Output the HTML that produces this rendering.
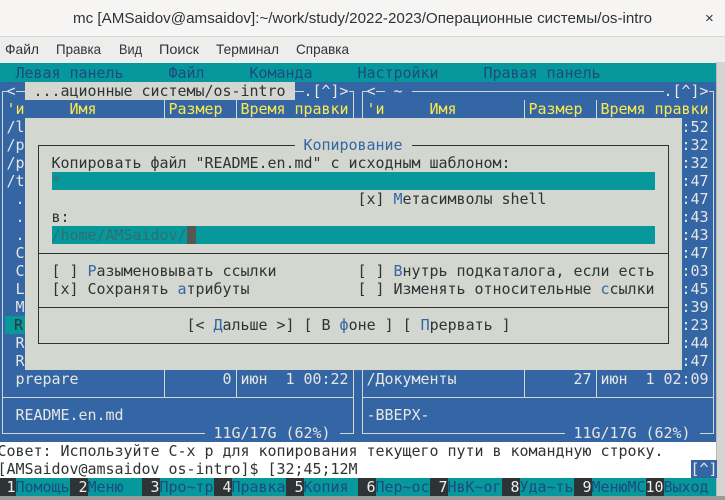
<!DOCTYPE html>
<html><head><meta charset="utf-8"><style>
*{margin:0;padding:0;box-sizing:border-box}
body{width:725px;height:500px;overflow:hidden;background:#fff;position:relative;font-family:"DejaVu Sans Mono","Liberation Mono",monospace}
.a{position:absolute}
.t{position:absolute;font:15px/18px "DejaVu Sans Mono","Liberation Mono",monospace;letter-spacing:-0.03px;white-space:pre;height:18px}
.w{color:#e6e6e4}.y{color:#fce94f}.k{color:#2e3436}.h{color:#3465a4}
.hl{position:absolute;height:1px}
.vl{position:absolute;width:1px}
.pb{background:#3465a4}
.bk{background:#2e3436;color:#eeeeec}
.tl{background:#06989a;color:#1d4b80}
</style></head><body>
<div class="a" style="left:0;top:0;width:725px;height:36px;background:#f6f5f4"></div>
<div class="a" style="left:0;top:36px;width:725px;height:28px;background:#ededec;border-top:1px solid #d8d8d8"></div>
<svg class="a" style="left:0;top:0" width="725" height="64">
<text x="73" y="23" textLength="579" lengthAdjust="spacingAndGlyphs" font-family="Liberation Sans, sans-serif" font-size="15" fill="#2e3436">mc [AMSaidov@amsaidov]:~/work/study/2022-2023/Операционные системы/os-intro</text>
<text x="705" y="23" font-family="Liberation Sans, sans-serif" font-size="15" fill="#2e3436">×</text>
<g font-family="Liberation Sans, sans-serif" font-size="14" fill="#2e3436">
<text x="5" y="54" textLength="34" lengthAdjust="spacingAndGlyphs">Файл</text>
<text x="56" y="54" textLength="45" lengthAdjust="spacingAndGlyphs">Правка</text>
<text x="119" y="54" textLength="23" lengthAdjust="spacingAndGlyphs">Вид</text>
<text x="159" y="54" textLength="40" lengthAdjust="spacingAndGlyphs">Поиск</text>
<text x="216" y="54" textLength="63" lengthAdjust="spacingAndGlyphs">Терминал</text>
<text x="296" y="54" textLength="53" lengthAdjust="spacingAndGlyphs">Справка</text>
</g></svg>

<div class="a" style="left:0;top:63px;width:716px;height:19px;background:#06989a"></div>
<div class="a pb" style="left:0;top:82px;width:716px;height:360px"></div>
<div class="a" style="left:716px;top:62px;width:9px;height:434px;background:#d4d4d2;border-left:1px solid #b8b8b6"></div>
<div class="a" style="left:0;top:496px;width:725px;height:4px;background:#9a9a98"></div>

<div class="t" style="left:15.5px;top:64px;color:#1d4b80">Левая панель</div>
<div class="t" style="left:168.5px;top:64px;color:#1d4b80">Файл</div>
<div class="t" style="left:249.5px;top:64px;color:#1d4b80">Команда</div>
<div class="t" style="left:357.5px;top:64px;color:#1d4b80">Настройки</div>
<div class="t" style="left:483.5px;top:64px;color:#1d4b80">Правая панель</div>

<div class="hl" style="left:2px;top:91px;width:352px;background:#d3d7cf"></div>
<div class="hl" style="left:2px;top:397px;width:352px;background:#d3d7cf"></div>
<div class="hl" style="left:2px;top:433px;width:352px;background:#d3d7cf"></div>
<div class="vl" style="left:2px;top:91px;height:343px;background:#d3d7cf"></div>
<div class="vl" style="left:353px;top:91px;height:343px;background:#d3d7cf"></div>
<div class="vl" style="left:164px;top:100px;height:297px;background:#d3d7cf"></div>
<div class="vl" style="left:236px;top:100px;height:297px;background:#d3d7cf"></div>
<div class="hl" style="left:362px;top:91px;width:352px;background:#d3d7cf"></div>
<div class="hl" style="left:362px;top:397px;width:352px;background:#d3d7cf"></div>
<div class="hl" style="left:362px;top:433px;width:352px;background:#d3d7cf"></div>
<div class="vl" style="left:362px;top:91px;height:343px;background:#d3d7cf"></div>
<div class="vl" style="left:713px;top:91px;height:343px;background:#d3d7cf"></div>
<div class="vl" style="left:524px;top:100px;height:297px;background:#d3d7cf"></div>
<div class="vl" style="left:596px;top:100px;height:297px;background:#d3d7cf"></div>

<div class="t w pb" style="left:6.5px;top:82px">&lt;</div>
<div class="t k" style="left:24.5px;top:82px;background:#d3d7cf"> ...ационные системы/os-intro </div>
<div class="t w pb" style="left:303.5px;top:82px">.[^]&gt;</div>
<div class="t w pb" style="left:366.5px;top:82px">&lt;</div>
<div class="t w pb" style="left:384.5px;top:82px"> ~ </div>
<div class="t w pb" style="left:663.5px;top:82px">.[^]&gt;</div>

<div class="t y" style="left:6.5px;top:100px">'и</div>
<div class="t y" style="left:69.5px;top:100px">Имя</div>
<div class="t y" style="left:168.5px;top:100px">Размер</div>
<div class="t y" style="left:240.5px;top:100px">Время правки</div>
<div class="t y" style="left:366.5px;top:100px">'и</div>
<div class="t y" style="left:429.5px;top:100px">Имя</div>
<div class="t y" style="left:528.5px;top:100px">Размер</div>
<div class="t y" style="left:600.5px;top:100px">Время правки</div>

<div class="t w" style="left:6.5px;top:118px">/l</div>
<div class="t w" style="left:6.5px;top:136px">/p</div>
<div class="t w" style="left:6.5px;top:154px">/p</div>
<div class="t w" style="left:6.5px;top:172px">/t</div>
<div class="t w" style="left:6.5px;top:190px"> .</div>
<div class="t w" style="left:6.5px;top:208px"> .</div>
<div class="t w" style="left:6.5px;top:226px"> .</div>
<div class="t w" style="left:6.5px;top:244px"> C</div>
<div class="t w" style="left:6.5px;top:262px"> C</div>
<div class="t w" style="left:6.5px;top:280px"> L</div>
<div class="t w" style="left:6.5px;top:298px"> M</div>
<div class="t k" style="left:5px;top:316px;width:20px;background:#06989a"> R</div>
<div class="t w" style="left:6.5px;top:334px"> R</div>
<div class="t w" style="left:6.5px;top:352px"> R</div>
<div class="t w" style="left:681.5px;top:118px">:52</div>
<div class="t w" style="left:681.5px;top:136px">:32</div>
<div class="t w" style="left:681.5px;top:154px">:32</div>
<div class="t w" style="left:681.5px;top:172px">:47</div>
<div class="t w" style="left:681.5px;top:190px">:47</div>
<div class="t w" style="left:681.5px;top:208px">:43</div>
<div class="t w" style="left:681.5px;top:226px">:43</div>
<div class="t w" style="left:681.5px;top:244px">:47</div>
<div class="t w" style="left:681.5px;top:262px">:03</div>
<div class="t w" style="left:681.5px;top:280px">:45</div>
<div class="t w" style="left:681.5px;top:298px">:39</div>
<div class="t w" style="left:681.5px;top:316px">:23</div>
<div class="t w" style="left:681.5px;top:334px">:44</div>
<div class="t w" style="left:681.5px;top:352px">:47</div>

<div class="a" style="left:24.5px;top:118px;width:657px;height:252px;background:#d3d7cf"></div>
<div class="a" style="left:38px;top:145px;width:631px;height:199px;border:1px solid #2e3436"></div>
<div class="hl" style="left:38px;top:253px;width:631px;background:#2e3436"></div>
<div class="hl" style="left:38px;top:307px;width:631px;background:#2e3436"></div>
<div class="t h" style="left:294.5px;top:136px;background:#d3d7cf"> Копирование </div>
<div class="t k" style="left:51.5px;top:154px">Копировать файл "README.en.md" с исходным шаблоном:</div>
<div class="t" style="left:51.5px;top:172px;width:603px;background:#06989a;color:#2f6f72">*</div>
<div class="t k" style="left:357.5px;top:190px">[x] <span class="h">М</span>етасимволы shell</div>
<div class="t k" style="left:51.5px;top:208px">в:</div>
<div class="t" style="left:51.5px;top:226px;width:603px;background:#06989a;color:#2f6f72">/home/AMSaidov/<span style="background:#555753"> </span></div>
<div class="t k" style="left:51.5px;top:262px">[ ] <span class="h">Р</span>азыменовывать ссылки</div>
<div class="t k" style="left:357.5px;top:262px">[ ] <span class="h">В</span>нутрь подкаталога, если есть</div>
<div class="t k" style="left:51.5px;top:280px">[x] Сохранять <span class="h">а</span>трибуты</div>
<div class="t k" style="left:357.5px;top:280px">[ ] Изменять относительные <span class="h">с</span>сылки</div>
<div class="t k" style="left:186.5px;top:316px">[&lt; <span class="h">Д</span>альше &gt;] [ В <span class="h">ф</span>оне ] [ <span class="h">П</span>рервать ]</div>

<div class="t w" style="left:15.5px;top:370px">prepare</div>
<div class="t w" style="left:222.5px;top:370px">0</div>
<div class="t w" style="left:240.5px;top:370px">июн  1 00:22</div>
<div class="t w" style="left:366.5px;top:370px">/Документы</div>
<div class="t w" style="left:573.5px;top:370px">27</div>
<div class="t w" style="left:600.5px;top:370px">июн  1 02:09</div>
<div class="t w" style="left:15.5px;top:406px">README.en.md</div>
<div class="t w" style="left:366.5px;top:406px">-ВВЕРХ-</div>
<div class="t w pb" style="left:204.5px;top:424px"> 11G/17G (62%) </div>
<div class="t w pb" style="left:564.5px;top:424px"> 11G/17G (62%) </div>

<div class="t k" style="left:-2.5px;top:442px">Совет: Используйте C-x p для копирования текущего пути в командную строку.</div>
<div class="t k" style="left:-2.5px;top:460px">[AMSaidov@amsaidov os-intro]$ [32;45;12M</div>
<div class="t w pb" style="left:690.5px;top:460px;width:26px">[^]</div>

<div class="a" style="left:0;top:478px;width:716px;height:18px;background:#06989a"></div>
<div class="t bk" style="left:-2.5px;top:478px"> 1</div><div class="t tl" style="left:15.5px;top:478px">Помощь</div>
<div class="t bk" style="left:69.5px;top:478px"> 2</div><div class="t tl" style="left:87.5px;top:478px">Меню</div>
<div class="t bk" style="left:141.5px;top:478px"> 3</div><div class="t tl" style="left:159.5px;top:478px">Про~тр</div>
<div class="t bk" style="left:213.5px;top:478px"> 4</div><div class="t tl" style="left:231.5px;top:478px">Правка</div>
<div class="t bk" style="left:285.5px;top:478px"> 5</div><div class="t tl" style="left:303.5px;top:478px">Копия</div>
<div class="t bk" style="left:357.5px;top:478px"> 6</div><div class="t tl" style="left:375.5px;top:478px">Пер~ос</div>
<div class="t bk" style="left:429.5px;top:478px"> 7</div><div class="t tl" style="left:447.5px;top:478px">НвК~ог</div>
<div class="t bk" style="left:501.5px;top:478px"> 8</div><div class="t tl" style="left:519.5px;top:478px">Уда~ть</div>
<div class="t bk" style="left:573.5px;top:478px"> 9</div><div class="t tl" style="left:591.5px;top:478px">МенюМС</div>
<div class="t bk" style="left:645.5px;top:478px">10</div><div class="t tl" style="left:663.5px;top:478px">Выход</div>
</body></html>
